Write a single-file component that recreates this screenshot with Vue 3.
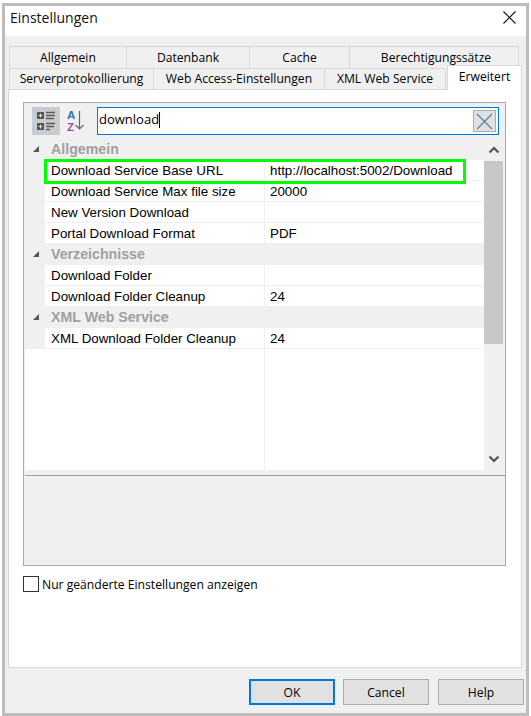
<script setup>
const row1 = [
  { t: 'Allgemein', w: 118 },
  { t: 'Datenbank', w: 124 },
  { t: 'Cache', w: 101 },
  { t: 'Berechtigungssätze', w: 170 }
]
const row2 = [
  { t: 'Serverprotokollierung', w: 145 },
  { t: 'Web Access-Einstellungen', w: 172 },
  { t: 'XML Web Service', w: 122 }
]
const groups = [
  { name: 'Allgemein', rows: [
    ['Download Service Base URL', 'http://localhost:5002/Download'],
    ['Download Service Max file size', '20000'],
    ['New Version Download', ''],
    ['Portal Download Format', 'PDF']
  ] },
  { name: 'Verzeichnisse', rows: [
    ['Download Folder', ''],
    ['Download Folder Cleanup', '24']
  ] },
  { name: 'XML Web Service', rows: [
    ['XML Download Folder Cleanup', '24']
  ] }
]
</script>

<template>
  <div class="window">
    <header class="titlebar">
      <span class="title">Einstellungen</span>
      <svg class="close" width="13" height="13" viewBox="0 0 13 13">
        <path d="M0.500 0.500L12.500 12.500M12.500 0.500L0.500 12.500" stroke="#111" stroke-width="1.100" fill="none" />
      </svg>
    </header>

    <div class="client">
      <div class="tabs">
        <div class="tabrow">
          <div v-for="tab in row1" :key="tab.t" class="tab" :style="{ width: tab.w + 'px' }">{{ tab.t }}</div>
        </div>
        <div class="tabrow">
          <div v-for="tab in row2" :key="tab.t" class="tab" :style="{ width: tab.w + 'px' }">{{ tab.t }}</div>
          <div class="tab active">Erweitert</div>
        </div>
      </div>

      <section class="panel">
        <div class="group">
          <div class="toolbar">
            <div class="tool on">
              <svg width="20" height="20" viewBox="0 0 20 20">
                <rect x="1" y="1" width="7" height="7" fill="#555" />
                <rect x="1" y="12" width="7" height="7" fill="#555" />
                <path d="M2.500 4.500H6.500M4.500 2.500V6.500M2.500 15.500H6.500M4.500 13.500V17.500" stroke="#ddd" stroke-width="1" />
                <path d="M10 1.500H19M10 4.500H19M10 7.500H18M10 12.500H19M10 15.500H18M10 18.500H14" stroke="#5a5a5a" stroke-width="1.300" />
              </svg>
            </div>
            <div class="tool az">
              <svg width="24" height="28" viewBox="0 0 24 28">
                <path d="M15.500 4V22M11.500 18L15.500 22L19.500 18" stroke="#666" stroke-width="1.200" fill="none" />
              </svg>
              <span class="az-a">A</span>
              <span class="az-z">Z</span>
            </div>
            <div class="search">
              <span class="query">download</span><span class="caret"></span>
              <div class="clear">
                <svg width="17" height="17" viewBox="0 0 17 17">
                  <path d="M1 1L16 16M16 1L1 16" stroke="#5f7fa8" stroke-width="1.300" fill="none" />
                </svg>
              </div>
            </div>
          </div>

          <div class="grid">
            <div class="table">
              <template v-for="g in groups" :key="g.name">
                <div class="cat">
                  <svg class="tri" width="8" height="8" viewBox="0 0 8 8"><path d="M7 1V7H1Z" fill="#555" /></svg>
                  <span>{{ g.name }}</span>
                </div>
                <div v-for="r in g.rows" :key="r[0]" class="row">
                  <div class="gutter"></div>
                  <div class="name">{{ r[0] }}</div>
                  <div class="value">{{ r[1] }}</div>
                </div>
              </template>
              <div class="filler"><div class="filler-col"></div></div>
              <div class="highlight"></div>
            </div>
            <div class="scroll">
              <div class="sbtn">
                <svg width="12" height="8" viewBox="0 0 12 8"><path d="M1.500 6.500L6 2L10.500 6.500" stroke="#555" stroke-width="2.200" fill="none" /></svg>
              </div>
              <div class="thumb"></div>
              <div class="track"></div>
              <div class="sbtn">
                <svg width="12" height="8" viewBox="0 0 12 8"><path d="M1.500 1.500L6 6L10.500 1.500" stroke="#555" stroke-width="2.200" fill="none" /></svg>
              </div>
            </div>
          </div>

          <div class="desc"></div>
        </div>

        <label class="check">
          <span class="box"></span>
          <span>Nur geänderte Einstellungen anzeigen</span>
        </label>
      </section>

      <footer class="footer">
        <button class="btn default">OK</button>
        <button class="btn">Cancel</button>
        <button class="btn help">Help</button>
      </footer>
    </div>
  </div>
</template>

<style>
html, body { margin: 0; background: #fff; }
</style>

<style scoped>
.window {
  box-sizing: border-box;
  width: 527px;
  height: 713px;
  margin: 3px 0 0 2px;
  border: 3px solid #bdbdbd;
  display: flex;
  flex-direction: column;
  background: #f0f0f0;
  font-family: "Open Sans", "Noto Sans", sans-serif;
  font-size: 12.150px;
  color: #000;
}
.titlebar {
  height: 30px;
  flex: none;
  box-sizing: border-box;
  background: #fff;
  display: flex;
  align-items: center;
  justify-content: space-between;
  padding: 0 10px 8px 5px;
}
.title { font-size: 14px; color: #111; }
.client {
  flex: 1;
  display: flex;
  flex-direction: column;
  padding: 10px 4px 0 3px;
  min-height: 0;
}
.tabs { flex: none; padding-left: 1px; }
.tabrow { display: flex; height: 21.500px; align-items: flex-end; }
.tab {
  box-sizing: border-box;
  height: 100%;
  border: 1px solid #d9d9d9;
  border-bottom: 0;
  margin-left: -1px;
  display: flex;
  align-items: center;
  justify-content: center;
  white-space: nowrap;
  background: #f0f0f0;
}
.tab:first-child { margin-left: 0; }
.tab:nth-child(4) { padding-left: 4px; }
.tab.active {
  position: relative;
  z-index: 2;
  width: 75px;
  height: 25px;
  margin-bottom: -1px;
  margin-left: 1px;
  background: #fff;
  padding-left: 0;
  padding-bottom: 4px;
}
.panel {
  flex: 1;
  box-sizing: border-box;
  width: 514px;
  height: 579px;
  background: #fff;
  border: 1px solid #d9d9d9;
  padding: 12px 15px 0 14px;
}
.group {
  box-sizing: border-box;
  height: 464px;
  border: 1px solid #a9a9a9;
  background: #f0f0f0;
  display: flex;
  flex-direction: column;
}
.toolbar {
  flex: none;
  height: 36px;
  box-sizing: border-box;
  padding: 4px 6px 4px 8px;
  display: flex;
}
.tool {
  box-sizing: border-box;
  width: 28px;
  height: 28px;
  display: flex;
  align-items: center;
  justify-content: center;
}
.tool.on { background: #cbcbcb; border: 1px solid #bcd0e6; }
.tool.az {
  position: relative;
  width: 24px;
  margin: 0 9px 0 4px;
  font-family: "Liberation Sans", sans-serif;
  font-weight: 700;
  font-size: 11.500px;
  line-height: 11px;
}
.az-a { position: absolute; left: 3px; top: 3px; color: #2f6fb5; }
.az-z { position: absolute; left: 3px; top: 15px; color: #8a52a8; }
.search {
  flex: 1;
  box-sizing: border-box;
  border: 1px solid #0078d7;
  background: #fff;
  display: flex;
  align-items: center;
  padding: 0 2px 0 1px;
  font-family: "Open Sans", sans-serif;
}
.query { font-size: 13px; padding-bottom: 4px; }
.caret { width: 1px; height: 16px; background: #000; margin-bottom: 3px; }
.clear {
  box-sizing: border-box;
  margin-left: auto;
  width: 23px;
  height: 22px;
  background: #e1e1e1;
  border: 1px solid #adadad;
  display: flex;
  align-items: center;
  justify-content: center;
}
.grid {
  flex: none;
  height: 331px;
  margin: 0 2px 0 1px;
  display: flex;
}
.table {
  position: relative;
  width: 459px;
  flex: none;
  display: flex;
  flex-direction: column;
  background: #fff;
  font-family: "Liberation Sans", sans-serif;
  font-size: 13.350px;
}
.cat {
  flex: none;
  height: 21px;
  box-sizing: border-box;
  background: #f0f0f0;
  display: flex;
  align-items: center;
  color: #a0a0a0;
  font-weight: 700;
  font-size: 14.200px;
  padding: 0 0 1px 7px;
}
.tri { margin-right: 11px; }
.row {
  flex: none;
  height: 21px;
  box-sizing: border-box;
  display: flex;
  border-bottom: 1px solid #f0f0f0;
  align-items: center;
}
.gutter { width: 20px; align-self: stretch; background: #f0f0f0; margin-bottom: -1px; }
.name {
  width: 219px;
  box-sizing: border-box;
  padding-left: 6px;
  align-self: stretch;
  display: flex;
  align-items: center;
  white-space: nowrap;
  color: #000;
}
.value {
  flex: 1;
  align-self: stretch;
  display: flex;
  align-items: center;
  padding-left: 5px;
  border-left: 1px solid #f0f0f0;
  color: #000;
}
.filler { flex: 1; display: flex; }
.filler-col { width: 239px; border-right: 1px solid #f0f0f0; }
.highlight {
  position: absolute;
  left: 19px;
  top: 20px;
  width: 422px;
  height: 25px;
  box-sizing: border-box;
  border: 3px solid #00ff00;
}
.scroll {
  flex: none;
  width: 19px;
  display: flex;
  flex-direction: column;
  background: #f0f0f0;
}
.sbtn {
  flex: none;
  height: 22px;
  display: flex;
  align-items: center;
  justify-content: center;
}
.thumb { flex: none; height: 183px; background: #c8c8c8; }
.track { flex: 1; }
.desc {
  flex: none;
  box-sizing: border-box;
  height: 90px;
  margin: 5px 0 0 1px;
  border-top: 1px solid #a0a0a0;
}
.check {
  display: flex;
  align-items: center;
  margin-top: 10px;
  height: 16px;
}
.box {
  box-sizing: border-box;
  width: 16px;
  height: 16px;
  border: 1px solid #333;
  background: #fff;
  margin-right: 3px;
}
.footer {
  flex: none;
  height: 45px;
  box-sizing: border-box;
  padding-top: 11px;
  margin-right: -2px;
  display: flex;
  justify-content: flex-end;
  gap: 8px;
}
.btn {
  box-sizing: border-box;
  width: 86px;
  height: 26px;
  background: #e1e1e1;
  border: 1px solid #adadad;
  font: inherit;
  color: #000;
  padding: 0;
}
.btn.help { margin-left: 1px; }
.btn.default { border: 2px solid #0078d7; }
</style>
